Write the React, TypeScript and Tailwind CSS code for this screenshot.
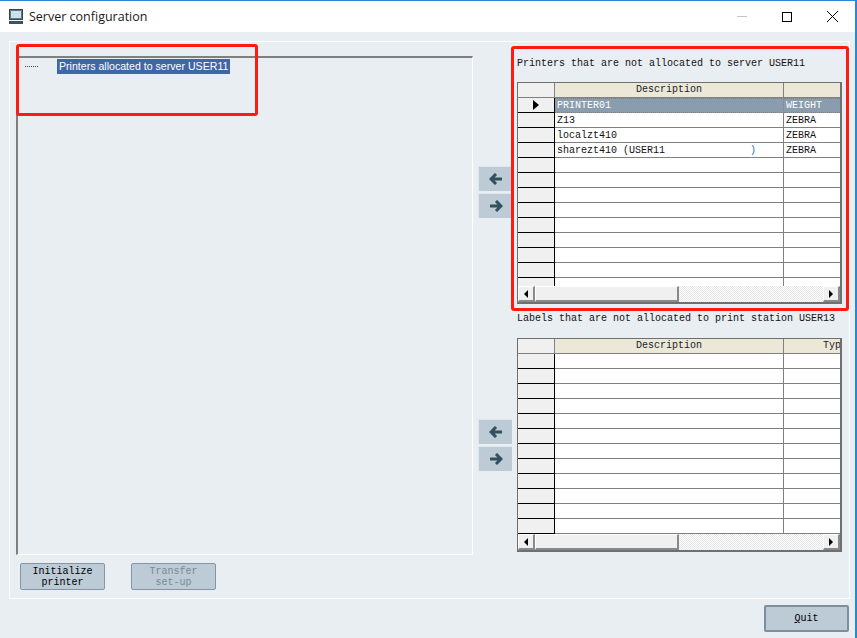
const MONO = "font-['Liberation_Mono',monospace] text-[10px]"

type GridRow = { desc?: string; desc2?: string; type?: string }

function LeftArrow() {
  return (
    <svg width="14" height="12" viewBox="0 0 14 12" fill="none" stroke="#33505f" strokeWidth="3">
      <path d="M13 6H2M7 1 2 6l5 5" />
    </svg>
  )
}

function RightArrow() {
  return (
    <svg width="14" height="12" viewBox="0 0 14 12" fill="none" stroke="#33505f" strokeWidth="3">
      <path d="M1 6h11M7 1l5 5-5 5" />
    </svg>
  )
}

function ArrowButtons() {
  return (
    <div className="flex flex-col gap-[2px]">
      <button className="w-[34px] h-[25px] flex items-center justify-center bg-[#bccbd6] border-t border-l border-[#dfe6ec]">
        <LeftArrow />
      </button>
      <button className="w-[34px] h-[25px] flex items-center justify-center bg-[#bccbd6] border-t border-l border-[#dfe6ec]">
        <RightArrow />
      </button>
    </div>
  )
}

function ScrollBar() {
  return (
    <div className="flex h-[16px] shrink-0 bg-[#f4f4f4]">
      <div className="w-[17px] flex items-center justify-center bg-[#f0f0f0] border-t border-l border-white border-r-2 border-r-[#8a8a8a] border-b-2 border-b-[#8a8a8a]">
        <div className="w-0 h-0 border-y-[4px] border-y-transparent border-r-[4px] border-r-black" />
      </div>
      <div className="w-[144px] bg-[#f0f0f0] border-t border-l border-white border-r-2 border-r-[#8a8a8a] border-b-2 border-b-[#8a8a8a]" />
      <div className="flex-1 bg-[repeating-conic-gradient(#e6e6e6_0_25%,#ffffff_0_50%)] bg-[length:2px_2px]" />
      <div className="w-[17px] flex items-center justify-center bg-[#f0f0f0] border-t border-l border-white border-r-2 border-r-[#8a8a8a] border-b-2 border-b-[#8a8a8a]">
        <div className="w-0 h-0 border-y-[4px] border-y-transparent border-l-[4px] border-l-black" />
      </div>
    </div>
  )
}

function DataGrid({ rows, typeHeader, height }: { rows: GridRow[]; typeHeader?: string; height: string }) {
  return (
    <div className={`w-[325px] ${height} flex flex-col border-2 border-t-[1px] border-l-[1px] border-[#6f6f6f] bg-white ${MONO}`}>
      <div className="flex-1 overflow-hidden">
        <div className="flex h-[15px] bg-[#ebe8d8] border-b border-[#808080] text-[#1a1a2e]">
          <div className="w-[37px] shrink-0 bg-[#f0f0f0] border-r border-[#808080]" />
          <div className="w-[229px] shrink-0 border-r border-[#808080] text-center leading-[13px]">Description</div>
          <div className="flex-1 pl-[39px] overflow-hidden whitespace-nowrap leading-[13px]">{typeHeader}</div>
        </div>
        {rows.map((row, i) => {
          const selected = i === 0 && row.desc === 'PRINTER01'
          return (
            <div key={i} className={`flex h-[15px] ${selected ? 'bg-[#8a9dae] text-white' : 'text-[#111]'}`}>
              <div className="w-[37px] shrink-0 flex items-center justify-center bg-[#f0f0f0] border-r border-r-black border-b border-b-black">
                {selected && <div className="w-0 h-0 border-y-[5px] border-y-transparent border-l-[6px] border-l-black" />}
              </div>
              <div className={`w-[229px] shrink-0 flex justify-between pl-[2px] pr-[27px] border-r border-b border-[#808080] whitespace-pre ${selected ? 'leading-[13px] border-dotted border-y border-[#3d4650]' : 'leading-[15px]'}`}>
                <span>{row.desc}</span>
                {row.desc2 && <span className="text-[#1f6fb5]">{row.desc2}</span>}
              </div>
              <div className={`flex-1 pl-[2px] border-b border-[#808080] ${selected ? 'leading-[13px] border-dotted border-y border-[#3d4650]' : 'leading-[15px]'}`}>{row.type}</div>
            </div>
          )
        })}
      </div>
      <ScrollBar />
    </div>
  )
}

const printers: GridRow[] = [
  { desc: 'PRINTER01', type: 'WEIGHT' },
  { desc: 'Z13', type: 'ZEBRA' },
  { desc: 'localzt410', type: 'ZEBRA' },
  { desc: 'sharezt410 (USER11', desc2: ')', type: 'ZEBRA' },
  ...Array.from({ length: 9 }, () => ({})),
]

const labels: GridRow[] = Array.from({ length: 12 }, () => ({}))

export default function App() {
  return (
    <div className="relative w-[857px] h-[638px] flex flex-col overflow-hidden bg-[#e9eef3] border-t border-r-2 border-[#2a86d6]">
      {/* title bar */}
      <div className="h-[31px] shrink-0 flex items-center bg-white pl-[8px] font-['Open_Sans',sans-serif] text-[12.5px] text-[#1a1a1a]">
        <svg width="16" height="16" viewBox="0 0 16 16" className="mr-[5px]">
          <rect x="1.5" y="0.5" width="13" height="10" fill="#5d7b8c" stroke="#37474f" />
          <rect x="3" y="2" width="10" height="7" fill="#cfe0ea" />
          <rect x="1" y="12" width="14" height="3" fill="#37555f" />
        </svg>
        <span className="mt-[2px]">Server configuration</span>
        <div className="ml-auto flex items-center">
          <div className="w-[10px] h-px bg-[#c4c4c4] mr-[35px]" />
          <div className="w-[10px] h-[10px] border border-black mr-[35px]" />
          <svg width="11" height="11" viewBox="0 0 11 11" stroke="#000" strokeWidth="1" className="mr-[17px]">
            <path d="M0 0l11 11M11 0 0 11" />
          </svg>
        </div>
      </div>

      {/* main panel */}
      <div className="mt-[9px] ml-[9px] mr-[5px] h-[558px] border border-white flex flex-col pl-[6px] pt-[14px]">
        <div className="flex">
          <div className="w-[457px] h-[499px] shrink-0 border-2 border-t-[#7f7f7f] border-l-[#7f7f7f] border-r-white border-b-white border-r-[1px] border-b-[1px] pt-[1px] pl-[7px]">
            <div className="flex items-center font-['Liberation_Sans',sans-serif] text-[10.6px]">
              <div className="w-[13px] border-t border-dotted border-[#444] mr-[19px]" />
              <span className="bg-[#3f67a8] text-white px-[2px] h-[15px] leading-[15px]">Printers allocated to server USER11</span>
            </div>
          </div>

          <div className="flex ml-[5px]">
            <div className="w-[39px] shrink-0 flex flex-col">
              <div className="mt-[110px]"><ArrowButtons /></div>
              <div className="mt-[201px]"><ArrowButtons /></div>
            </div>
            <div className={`flex flex-col ${MONO} text-[#111]`}>
              <div className="h-[26px] pt-[1px] leading-[13px] whitespace-nowrap">Printers that are not allocated to server USER11</div>
              <DataGrid rows={printers} height="h-[222px]" />
              <div className="h-[27px] mt-[7px] pt-[1px] leading-[13px] whitespace-nowrap">Labels that are not allocated to print station USER13</div>
              <DataGrid rows={labels} typeHeader="Typ" height="h-[214px]" />
            </div>
          </div>
        </div>

        <div className="flex gap-[26px] mt-[8px] ml-[4px]">
          <button className={`w-[85px] h-[27px] rounded-[2px] bg-[#bccbd6] border border-[#8496a5] text-black leading-[11px] ${MONO}`}>
            Initialize<br />printer
          </button>
          <button className={`w-[85px] h-[27px] rounded-[2px] bg-[#bccbd6] border border-[#8496a5] text-[#7d8a94] leading-[11px] ${MONO}`}>
            Transfer<br />set-up
          </button>
        </div>
      </div>

      {/* quit */}
      <div className="flex justify-end mt-[6px] pr-[6px]">
        <button className={`w-[85px] h-[27px] rounded-[2px] bg-[#bccbd6] border-2 border-[#7d8e9c] text-black ${MONO}`}>
          <span className="underline">Q</span>uit
        </button>
      </div>

      {/* red annotations */}
      <div className="absolute left-[16px] top-[43px] w-[242px] h-[72px] border-[3px] border-[#ff1a12] rounded-[3px]" />
      <div className="absolute left-[511px] top-[45px] w-[338px] h-[265px] border-[3px] border-[#ff1a12] rounded-[3px]" />
    </div>
  )
}
